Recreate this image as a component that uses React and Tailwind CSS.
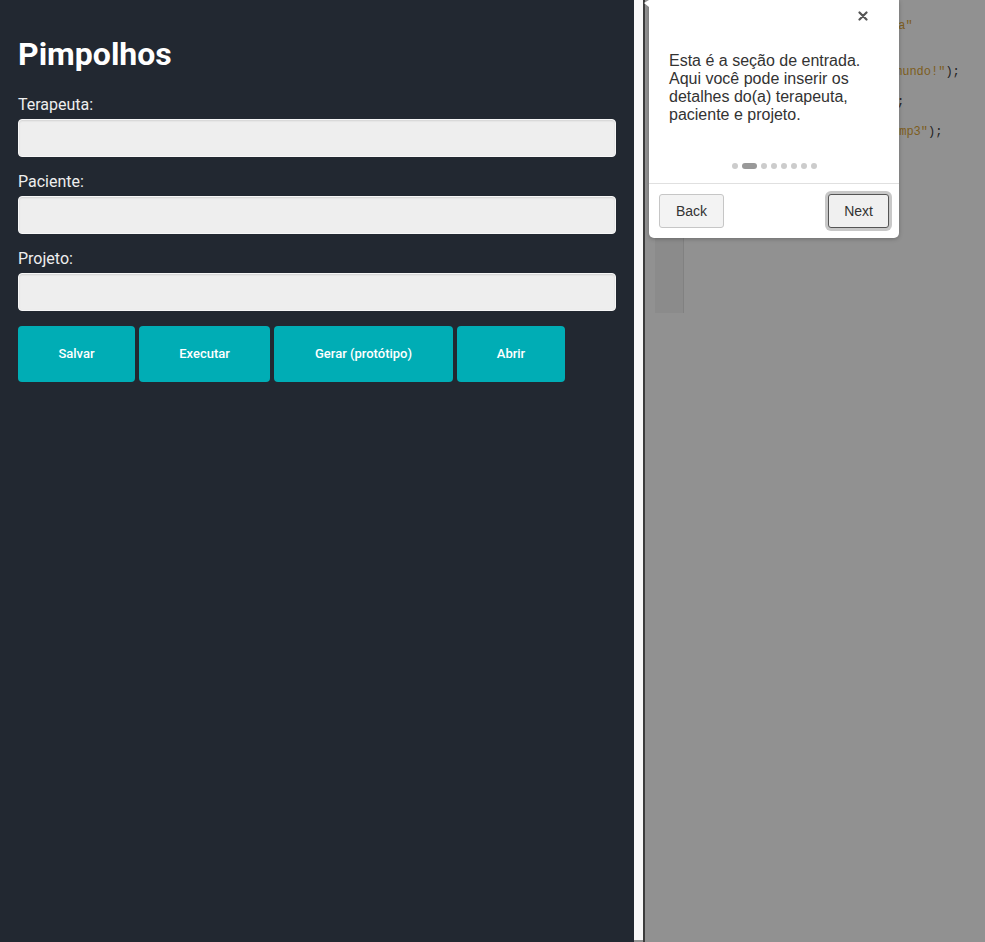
import { useState } from 'react';

const campos = [
  { id: 'terapeuta', label: 'Terapeuta:' },
  { id: 'paciente', label: 'Paciente:' },
  { id: 'projeto', label: 'Projeto:' },
];

const botoes = [
  { label: 'Salvar', w: 'w-[117px]' },
  { label: 'Executar', w: 'w-[131px]' },
  { label: 'Gerar (protótipo)', w: 'w-[179px]' },
  { label: 'Abrir', w: 'w-[108px]' },
];

// só os pedaços do código que aparecem à direita do balão do tour
const codigo = [
  { pl: 'pl-[207px]', partes: [{ t: 'ma"', c: 's' }] },
  null,
  null,
  { pl: 'pl-[211px]', partes: [{ t: 'mundo!"', c: 's' }, { t: ');', c: 'p' }] },
  null,
  { pl: 'pl-[213px]', partes: [{ t: ';', c: 'p' }] },
  null,
  { pl: 'pl-[208px]', partes: [{ t: '.mp3"', c: 's' }, { t: ');', c: 'p' }] },
];

function Entrada() {
  return (
    <section className="w-[634px] shrink-0 bg-[#222831] px-[18px] pt-[35px] font-['Roboto',sans-serif] text-[#eeeeee]">
      <h1 className="text-[32px] leading-[38px] font-bold text-white">Pimpolhos</h1>
      <div className="pt-[7px]">
        {campos.map(({ id, label }) => (
          <div key={id}>
            <label htmlFor={id} className="block mt-[15px] mb-[5px] text-[16px] leading-[19px]">
              {label}
            </label>
            <input
              id={id}
              className="block w-full h-[38px] rounded-[4px] border border-[#f7f7f7] bg-[#eeeeee] shadow-[inset_0_1px_2px_rgba(0,0,0,0.12)] outline-none"
            />
          </div>
        ))}
      </div>
      <div className="flex gap-[4px] mt-[15px]">
        {botoes.map(({ label, w }) => (
          <button
            key={label}
            className={`${w} h-[56px] rounded-[4px] bg-[#00adb5] text-white text-[13px] font-medium`}
          >
            {label}
          </button>
        ))}
      </div>
    </section>
  );
}

function Editor() {
  return (
    <div className="flex-1 bg-[#919191] pl-[10px]">
      <div className="flex h-[313px]">
        <div className="w-[29px] shrink-0 bg-[#8b8b8b] border-r border-[#818181]" />
        <div className="flex-1 pt-[19px] font-['Liberation_Mono',monospace] text-[12px] leading-[15.2px]">
          {codigo.map((linha, i) => (
            <div key={i} className={`h-[15.2px] whitespace-pre ${linha ? linha.pl : ''}`}>
              {linha &&
                linha.partes.map((p, j) => (
                  <span key={j} className={p.c === 's' ? 'text-[#7d5d1d]' : 'text-[#1f1f1f]'}>
                    {p.t}
                  </span>
                ))}
            </div>
          ))}
        </div>
      </div>
    </div>
  );
}

function Tour() {
  const [passo] = useState(1);
  return (
    <div className="absolute left-[649px] top-0 w-[250px] bg-white rounded-b-[5px] shadow-[0_1px_4px_rgba(0,0,0,0.25)] font-['Liberation_Sans',Arial,sans-serif]">
      {/* seta */}
      <div className="absolute -left-[5px] top-0 w-0 h-0 border-t-[3px] border-b-[4px] border-r-[5px] border-t-transparent border-b-transparent border-r-white" />
      <button className="absolute right-[30px] top-[9px] w-[12px] h-[14px] flex items-center justify-center text-[#555]">
        <svg width="10" height="10" viewBox="0 0 10 10">
          <path d="M1.5 1.5 L8.5 8.5 M8.5 1.5 L1.5 8.5" stroke="currentColor" strokeWidth="2.2" strokeLinecap="round" />
        </svg>
      </button>
      <div className="pt-[52px] px-[20px]">
        <p className="text-[16px] leading-[18px] text-[#333]">
          Esta é a seção de entrada. Aqui você pode inserir os detalhes do(a) terapeuta, paciente e projeto.
        </p>
      </div>
      <div className="flex justify-center items-center gap-[4px] mt-[39px] h-[6px]">
        {Array.from({ length: 8 }).map((_, i) =>
          i === passo ? (
            <span key={i} className="w-[15px] h-[6px] rounded-full bg-[#999]" />
          ) : (
            <span key={i} className="w-[6px] h-[6px] rounded-full bg-[#ccc]" />
          )
        )}
      </div>
      <div className="mt-[14px] border-t border-[#e0e0e0] p-[10px] flex justify-between">
        <button className="h-[34px] px-[16px] rounded-[3px] border border-[#c6c6c6] bg-[#f3f3f3] text-[14px] text-[#333]">
          Back
        </button>
        <button className="h-[34px] px-[15px] rounded-[3px] border border-[#555] bg-[#f0f0f0] text-[14px] text-[#333] ring-[3px] ring-[#c8c8c8]">
          Next
        </button>
      </div>
    </div>
  );
}

export default function App() {
  return (
    <div className="relative flex h-[942px] w-[985px] overflow-hidden bg-[#919191]">
      <Entrada />
      <div className="w-[9px] h-[940px] bg-[#f8f8f8]" />
      <div className="w-[2px] bg-[#3c3c3c]" />
      <Editor />
      <Tour />
    </div>
  );
}
